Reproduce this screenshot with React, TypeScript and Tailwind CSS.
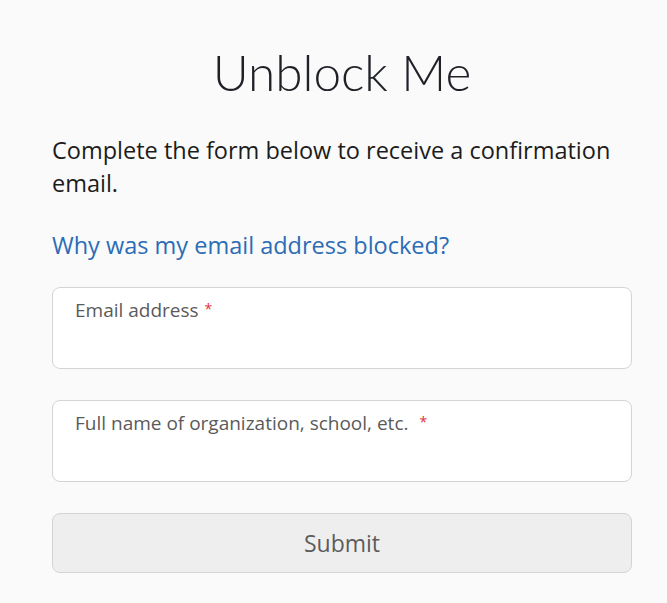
import React from 'react';

function Field({ label }: { label: string }) {
  return (
    <label className="block h-[82px] rounded-lg border border-[#d4d4d4] bg-white px-[22px] pt-[8px]">
      <span className="text-[19px] leading-[26px] text-[#5a5a5a]">
        {label}
        <span className="ml-[6px] align-[3px] text-[14px] text-[#e0303a]">*</span>
      </span>
      <input className="block w-full bg-transparent text-[18px] outline-none" />
    </label>
  );
}

export default function App() {
  return (
    <div className="min-h-[603px] bg-[#fafafa] font-['Open_Sans',sans-serif]">
      <div className="ml-[52px] w-[580px] pt-[40px]">
        <h1 className="text-center font-['Lato',sans-serif] text-[49.5px] font-light leading-[64px] text-[#1f2127]">
          Unblock Me
        </h1>
        <p className="mt-[30px] text-[23.5px] leading-[33px] text-[#1c1c1c]">
          Complete the form below to receive a confirmation email.
        </p>
        <a href="#" className="mt-[29px] block text-[23.5px] leading-[33px] text-[#2b6cb5]">
          Why was my email address blocked?
        </a>
        <form className="mt-[25px] flex flex-col gap-[31px]">
          <Field label="Email address" />
          <Field label="Full name of organization, school, etc. " />
          <button
            type="button"
            className="h-[60px] rounded-lg border border-[#d4d4d4] bg-[#eeeeee] text-[23px] text-[#5c5c5c]"
          >
            Submit
          </button>
        </form>
      </div>
    </div>
  );
}
